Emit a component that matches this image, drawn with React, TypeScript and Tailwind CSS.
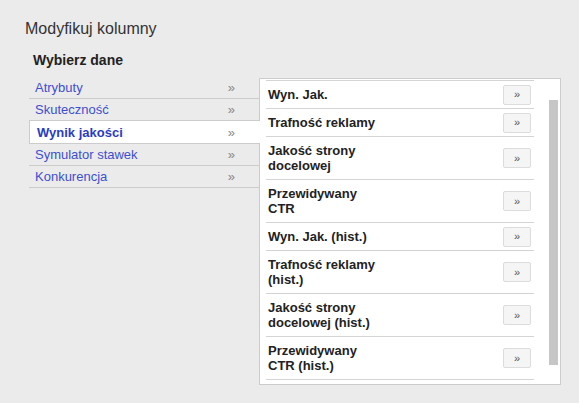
import React from "react"

const categories = [
  { label: "Atrybuty" },
  { label: "Skuteczność" },
  { label: "Wynik jakości", active: true },
  { label: "Symulator stawek" },
  { label: "Konkurencja" },
]

const columns = [
  "Wyn. Jak.",
  "Trafność reklamy",
  "Jakość strony docelowej",
  "Przewidywany CTR",
  "Wyn. Jak. (hist.)",
  "Trafność reklamy (hist.)",
  "Jakość strony docelowej (hist.)",
  "Przewidywany CTR (hist.)",
]

export default function App() {
  return (
    <div className="h-[403px] w-[579px] overflow-hidden bg-[#ebebeb] font-['Liberation_Sans',Arial,sans-serif]">
      <h1 className="pl-[25px] pt-[20px] text-[16px] font-normal leading-[18px] text-[#333]">
        Modyfikuj kolumny
      </h1>
      <h2 className="mt-[14px] pl-[33px] text-[14px] font-bold leading-[16px] text-[#222]">
        Wybierz dane
      </h2>

      <div className="mt-[9px] flex items-start pl-[29px]">
        {/* Categories */}
        <ul className="relative z-10 w-[231px]">
          {categories.map((cat) => (
            <li
              key={cat.label}
              className={
                cat.active
                  ? "flex h-[23px] items-center justify-between border-b border-l border-[#cccccc] bg-white pl-[7px] pr-[25px] text-[13px] font-bold leading-[15px] text-[#2a3bc4]"
                  : "flex h-[22px] items-center justify-between border-b border-[#cccccc] pl-[6px] pr-[25px] text-[13px] leading-[15px] text-[#3d4fcf]"
              }
            >
              <span>{cat.label}</span>
              <span className="font-normal text-[#888]">»</span>
            </li>
          ))}
        </ul>

        {/* Columns panel */}
        <div className="-ml-px mt-px flex h-[307px] w-[302px] border border-[#cccccc] bg-white">
          <ul className="ml-[6px] mt-px w-[268px]">
            {columns.map((col, i) => (
              <li
                key={col}
                className={
                  "flex items-center justify-between border-b border-[#d4d4d4] pl-[2px] pr-[3px] " +
                  (i === 0 ? "border-t" : "")
                }
              >
                <span className="w-[116px] py-[6px] text-[13px] font-bold leading-[15px] text-[#222]">
                  {col}
                </span>
                <button className="flex h-[20px] w-[28px] items-center justify-center rounded-[2px] border border-[#dcdcdc] bg-[#f5f5f5] text-[11px] leading-none text-[#555]">
                  »
                </button>
              </li>
            ))}
          </ul>
          <div className="ml-[15px] pt-[21px]">
            <div className="h-[265px] w-[9px] bg-[#c6c6c6]" />
          </div>
        </div>
      </div>
    </div>
  )
}
